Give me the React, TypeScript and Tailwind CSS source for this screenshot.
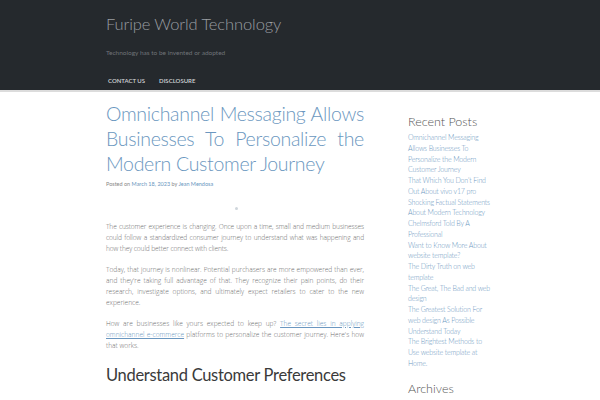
export default function App() {
  const posts = [
    'Omnichannel Messaging Allows Businesses To Personalize the Modern Customer Journey',
    "That Which You Don't Find Out About vivo v17 pro",
    'Shocking Factual Statements About Modern Technology Chelmsford Told By A Professional',
    'Want to Know More About website template?',
    'The Dirty Truth on web template',
    'The Great, The Bad and web design',
    'The Greatest Solution For web design As Possible Understand Today',
    'The Brightest Methods to Use website template at Home.',
  ];

  return (
    <div className="min-h-[400px] bg-white" style={{ fontFamily: '"Lato", "Liberation Sans", sans-serif' }}>
      {/* Header */}
      <header className="bg-[#25292d] border-b-2 border-[#dcdcdc]">
        <div className="mx-auto w-[388px] h-[90px] flex flex-col">
          <h1 className="pt-[12px] text-[16.5px] leading-[24px] font-light tracking-[-0.1px] text-[#9a9ea2]">Furipe World Technology</h1>
          <p className="mt-[12px] text-[6.5px] leading-[10px] text-[#6f7378]">Technology has to be invented or adopted</p>
          <nav className="mt-[18px] flex gap-[14px] pl-[2px] text-[6px] font-semibold uppercase text-[#d0d3d6]">
            <a>Contact Us</a>
            <a>Disclosure</a>
          </nav>
        </div>
      </header>

      {/* Body */}
      <div className="mx-auto w-[388px] flex gap-[44px]">
        <main className="w-[258px] pt-[9px]">
          <h2 className="text-[19.5px] leading-[25px] font-light tracking-[-0.3px] text-[#6b97c0] text-justify">
            Omnichannel Messaging Allows Businesses To Personalize the Modern Customer Journey
          </h2>
          <p className="mt-[3px] text-[5.5px] leading-[10px] text-[#888]">
            Posted on <span className="text-[#6b97c0]">March 18, 2023</span> by <span className="text-[#6b97c0]">Jean Mendosa</span>
          </p>
          <div className="flex justify-center pt-[18px]">
            <span className="w-[3px] h-[3px] rounded-full bg-[#cfd6dc] ml-[2px]" />
          </div>
          <div
            className="mt-[11px] text-[6.6px] leading-[11px] font-light text-[#6f6f6f] text-justify"
            style={{ fontFamily: '"Open Sans", "Liberation Sans", sans-serif' }}
          >
            <p className="tracking-[-0.1px]">
              The customer experience is changing. Once upon a time, small and medium businesses could follow a standardized consumer journey to understand what was happening and how they could better connect with clients.
            </p>
            <p className="mt-[10px]">
              Today, that journey is nonlinear. Potential purchasers are more empowered than ever, and they're taking full advantage of that. They recognize their pain points, do their research, investigate options, and ultimately expect retailers to cater to the new experience.
            </p>
            <p className="mt-[10px]">
              How are businesses like yours expected to keep up?{' '}
              <a className="text-[#6b97c0] underline">The secret lies in applying omnichannel e-commerce</a> platforms to personalize the customer journey. Here's how that works.
            </p>
          </div>
          <h3 className="mt-[12px] text-[16.5px] leading-[24px] tracking-[-0.3px] text-[#3a3a3a]">Understand Customer Preferences</h3>
        </main>

        <aside className="flex-1 pt-[22px]">
          <h4 className="text-[12.5px] leading-[16px] font-light text-[#555]">Recent Posts</h4>
          <ul className="mt-[2px] text-[7px] leading-[10.75px] font-light tracking-[-0.15px] text-[#6b97c0]">
            {posts.map((p) => (
              <li key={p}>{p}</li>
            ))}
          </ul>
          <h4 className="mt-[12px] text-[12.5px] leading-[16px] font-light text-[#555]">Archives</h4>
        </aside>
      </div>
    </div>
  );
}
